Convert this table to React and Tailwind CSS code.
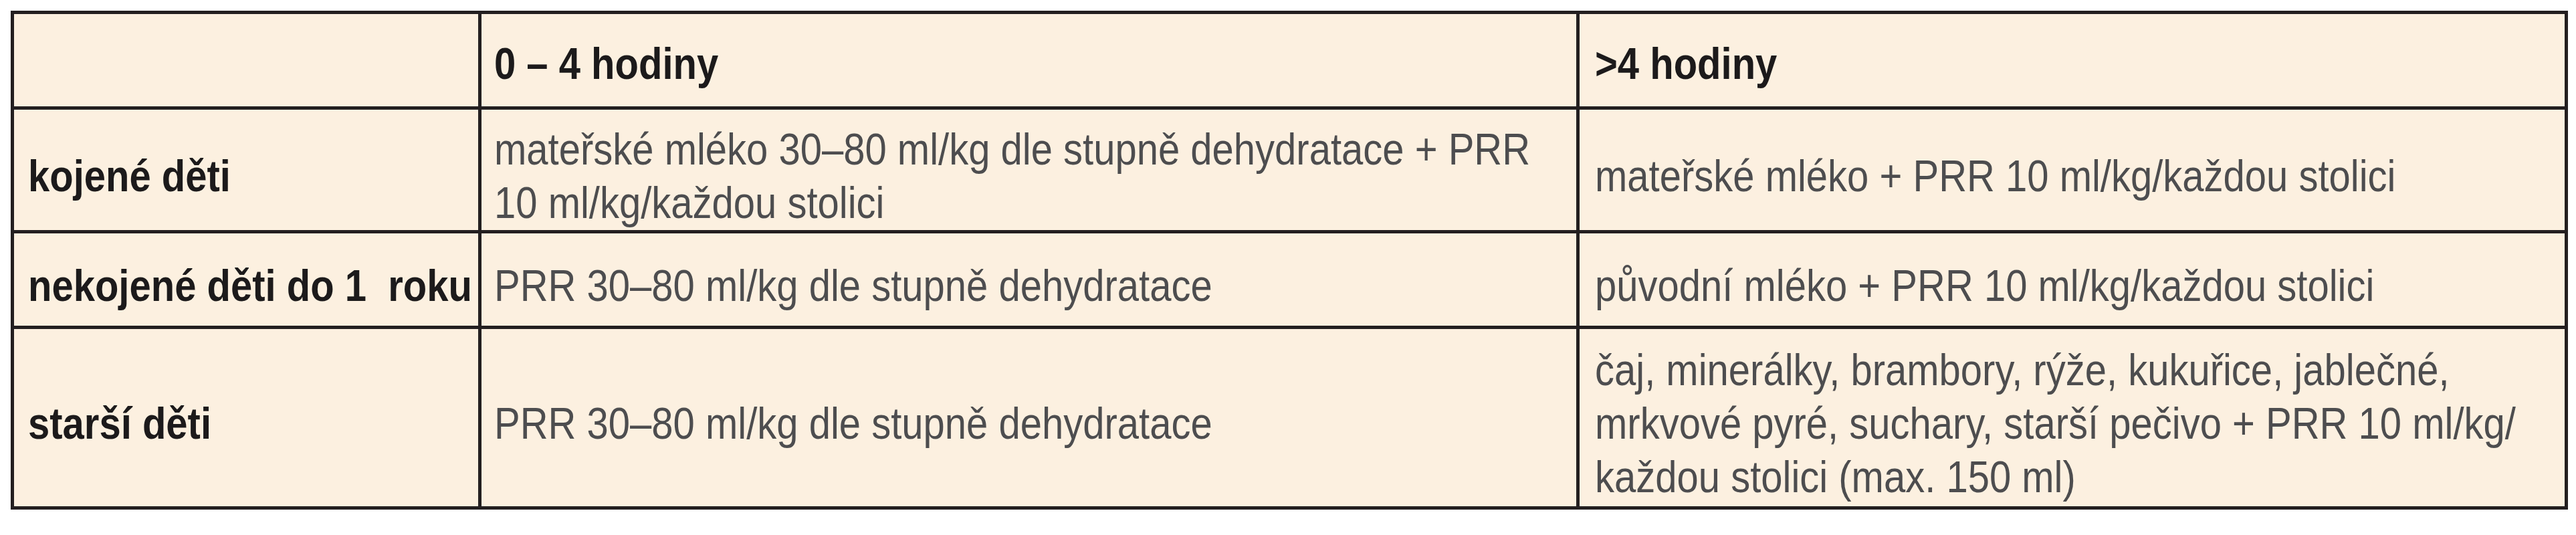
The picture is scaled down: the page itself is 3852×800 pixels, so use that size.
import React from 'react'

const rows = [
    {
        label: 'kojené děti',
        early: ['mateřské mléko 30–80 ml/kg dle stupně dehydratace + PRR', '10 ml/kg/každou stolici'],
        late: ['mateřské mléko + PRR 10 ml/kg/každou stolici'],
    },
    {
        label: 'nekojené děti do 1\u00a0 roku',
        early: ['PRR 30–80 ml/kg dle stupně dehydratace'],
        late: ['původní mléko + PRR 10 ml/kg/každou stolici'],
    },
    {
        label: 'starší děti',
        early: ['PRR 30–80 ml/kg dle stupně dehydratace'],
        late: [
            'čaj, minerálky, brambory, rýže, kukuřice, jablečné,',
            'mrkvové pyré, suchary, starší pečivo + PRR 10 ml/kg/',
            'každou stolici (max. 150 ml)',
        ],
    },
]

// the print font is tall and narrow: stretch the text vertically
const Lines = ({ lines }) => (
    <div className="whitespace-nowrap scale-y-[1.16]">
        {lines.map((line, i) => (
            <div key={i}>{line}</div>
        ))}
    </div>
)

const App = () => {
    return (
        <div className="min-h-screen bg-white pt-[16px] pl-[16px] font-['Liberation_Sans',sans-serif] text-[58px] leading-[69px]">
            <div className="grid w-fit grid-cols-[694px_1637px_1473px] grid-rows-[138px_180px_138px_265px] gap-[5px] bg-[#231f20] p-[5px]">
                {/* header */}
                <div className="bg-[#fcf0e0]"></div>
                <div className="flex items-center bg-[#fcf0e0] pt-[8px] pl-[19px] font-bold text-[#1c1a1b]">
                    <Lines lines={['0 – 4 hodiny']} />
                </div>
                <div className="flex items-center bg-[#fcf0e0] pt-[8px] pl-[23px] font-bold text-[#1c1a1b]">
                    <Lines lines={['>4 hodiny']} />
                </div>

                {rows.map((row) => (
                    <React.Fragment key={row.label}>
                        <div className="flex items-center bg-[#fcf0e0] pt-[16px] pl-[21px] font-bold text-[#1c1a1b]">
                            <Lines lines={[row.label]} />
                        </div>
                        <div className="flex items-center bg-[#fcf0e0] pt-[16px] pl-[19px] text-[#4d4d4f]">
                            <Lines lines={row.early} />
                        </div>
                        <div className="flex items-center bg-[#fcf0e0] pt-[16px] pl-[23px] text-[#4d4d4f]">
                            <Lines lines={row.late} />
                        </div>
                    </React.Fragment>
                ))}
            </div>
        </div>
    )
}

export default App
